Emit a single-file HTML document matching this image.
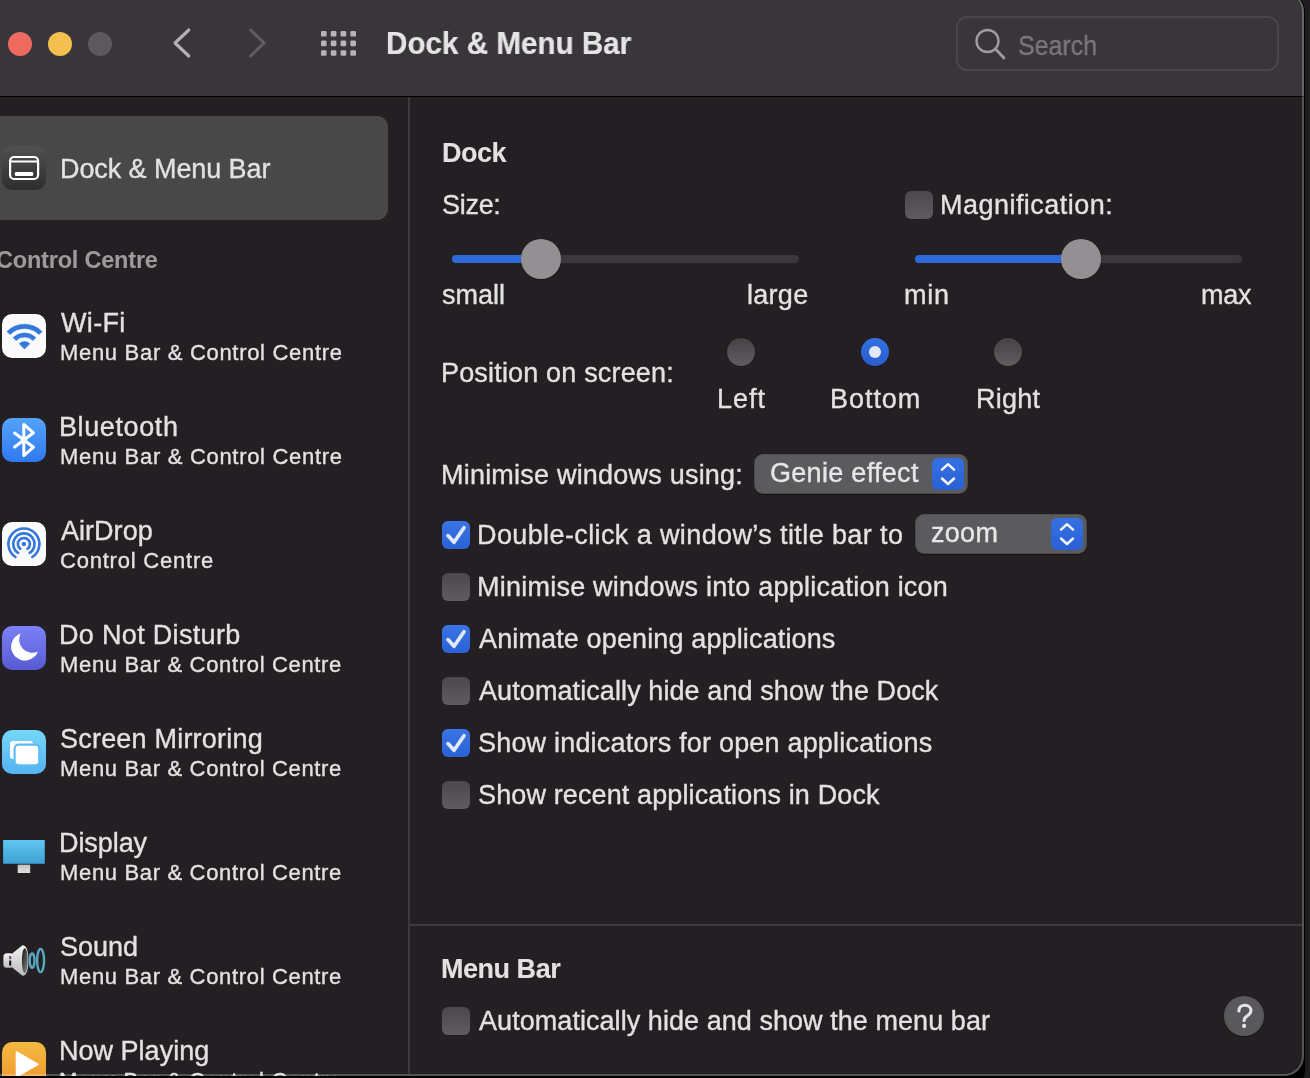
<!DOCTYPE html>
<html><head><meta charset="utf-8"><style>
html,body{margin:0;padding:0;width:1310px;height:1078px;overflow:hidden;background:#1f1c1f}
.t{position:absolute;white-space:nowrap;line-height:normal;font-family:"Liberation Sans", sans-serif;-webkit-text-stroke:0.35px currentColor;will-change:transform}
</style></head><body>
<div style="position:absolute;left:-21px;top:-9px;width:1326px;height:1100px;background:#000;border-radius:0 21px 21px 0"></div>
<div style="position:absolute;left:-20px;top:-8px;width:1324px;height:1084px;background:#231f22;border-radius:0 20px 20px 0;overflow:hidden"><div style="position:absolute;left:0;top:0;width:1324px;height:104px;background:#39363a"></div><div style="position:absolute;left:0;top:104px;width:1324px;height:1px;background:#000"></div></div>
<div style="position:absolute;left:8px;top:32px;width:24px;height:24px;border-radius:50%;background:#ee6a5f"></div>
<div style="position:absolute;left:48px;top:32px;width:24px;height:24px;border-radius:50%;background:#f5bf4f"></div>
<div style="position:absolute;left:88px;top:32px;width:24px;height:24px;border-radius:50%;background:#5c585c"></div>
<svg style="position:absolute;left:0;top:0" width="400" height="96"><polyline points="188.8,30 175,43 188.8,56" fill="none" stroke="#b3b1b3" stroke-width="3.1" stroke-linecap="round" stroke-linejoin="round"/><polyline points="250.5,30 264.2,43 250.5,56" fill="none" stroke="#5f5d60" stroke-width="3.1" stroke-linecap="round" stroke-linejoin="round"/><rect x="321.0" y="31.0" width="5.6" height="5.6" rx="1.2" fill="#b6b4b6"/><rect x="330.8" y="31.0" width="5.6" height="5.6" rx="1.2" fill="#b6b4b6"/><rect x="340.6" y="31.0" width="5.6" height="5.6" rx="1.2" fill="#b6b4b6"/><rect x="350.4" y="31.0" width="5.6" height="5.6" rx="1.2" fill="#b6b4b6"/><rect x="321.0" y="40.6" width="5.6" height="5.6" rx="1.2" fill="#b6b4b6"/><rect x="330.8" y="40.6" width="5.6" height="5.6" rx="1.2" fill="#b6b4b6"/><rect x="340.6" y="40.6" width="5.6" height="5.6" rx="1.2" fill="#b6b4b6"/><rect x="350.4" y="40.6" width="5.6" height="5.6" rx="1.2" fill="#b6b4b6"/><rect x="321.0" y="50.2" width="5.6" height="5.6" rx="1.2" fill="#b6b4b6"/><rect x="330.8" y="50.2" width="5.6" height="5.6" rx="1.2" fill="#b6b4b6"/><rect x="340.6" y="50.2" width="5.6" height="5.6" rx="1.2" fill="#b6b4b6"/><rect x="350.4" y="50.2" width="5.6" height="5.6" rx="1.2" fill="#b6b4b6"/></svg>
<div class="t" id="t1" style="left:385.79px;top:25.95px;font-size:31px;font-weight:bold;color:#e6e4e6;transform:scaleX(0.9553264066623469);transform-origin:0 0;-webkit-text-stroke:0.2px currentColor;">Dock &amp; Menu Bar</div>
<div style="position:absolute;left:956px;top:16px;width:323px;height:55px;border:2px solid #4a474b;border-radius:11px;box-sizing:border-box"></div>
<svg style="position:absolute;left:970px;top:24px" width="44" height="44"><circle cx="17.5" cy="17" r="11" fill="none" stroke="#9e9c9e" stroke-width="2.4"/><line x1="25.5" y1="25" x2="34" y2="34" stroke="#9e9c9e" stroke-width="2.8" stroke-linecap="round"/></svg>
<div class="t" id="t2" style="left:1017.96px;top:31.16px;font-size:27px;font-weight:normal;color:#7b787c;transform:scaleX(0.9245880301133645);transform-origin:0 0;">Search</div>
<div style="position:absolute;left:408px;top:97px;width:2px;height:977px;background:#3c383c"></div>
<div style="position:absolute;left:410px;top:924px;width:892px;height:2px;background:#3c383c"></div>
<div style="position:absolute;left:-12px;top:116px;width:400px;height:104px;background:#474847;border-radius:11px"></div>
<div class="t" id="t3" style="left:60.09px;top:153.56px;font-size:27px;font-weight:normal;color:#e3e1e3;letter-spacing:-0.079px;">Dock &amp; Menu Bar</div>
<div class="t" id="t4" style="left:-4.00px;top:246.93px;font-size:23.5px;font-weight:bold;color:#9c9a9c;letter-spacing:-0.200px;-webkit-text-stroke:0.1px currentColor;">Control Centre</div>
<div class="t" id="t5" style="left:60.52px;top:308.37px;font-size:27px;font-weight:normal;color:#e3e1e3;letter-spacing:0.331px;">Wi-Fi</div>
<div class="t" id="t6" style="left:60.34px;top:340.49px;font-size:22px;font-weight:normal;color:#e3e1e3;letter-spacing:0.692px;">Menu Bar &amp; Control Centre</div>
<div class="t" id="t7" style="left:58.64px;top:412.37px;font-size:27px;font-weight:normal;color:#e3e1e3;letter-spacing:0.602px;">Bluetooth</div>
<div class="t" id="t8" style="left:60.34px;top:444.49px;font-size:22px;font-weight:normal;color:#e3e1e3;letter-spacing:0.692px;">Menu Bar &amp; Control Centre</div>
<div class="t" id="t9" style="left:60.94px;top:516.37px;font-size:27px;font-weight:normal;color:#e3e1e3;letter-spacing:0.029px;">AirDrop</div>
<div class="t" id="t10" style="left:59.98px;top:548.49px;font-size:22px;font-weight:normal;color:#e3e1e3;letter-spacing:0.787px;">Control Centre</div>
<div class="t" id="t11" style="left:58.64px;top:620.37px;font-size:27px;font-weight:normal;color:#e3e1e3;letter-spacing:0.322px;">Do Not Disturb</div>
<div class="t" id="t12" style="left:60.34px;top:652.49px;font-size:22px;font-weight:normal;color:#e3e1e3;letter-spacing:0.667px;">Menu Bar &amp; Control Centre</div>
<div class="t" id="t13" style="left:59.53px;top:724.37px;font-size:27px;font-weight:normal;color:#e3e1e3;letter-spacing:0.209px;">Screen Mirroring</div>
<div class="t" id="t14" style="left:60.34px;top:756.49px;font-size:22px;font-weight:normal;color:#e3e1e3;letter-spacing:0.667px;">Menu Bar &amp; Control Centre</div>
<div class="t" id="t15" style="left:58.64px;top:828.37px;font-size:27px;font-weight:normal;color:#e3e1e3;letter-spacing:-0.070px;">Display</div>
<div class="t" id="t16" style="left:60.34px;top:860.49px;font-size:22px;font-weight:normal;color:#e3e1e3;letter-spacing:0.667px;">Menu Bar &amp; Control Centre</div>
<div class="t" id="t17" style="left:59.53px;top:932.37px;font-size:27px;font-weight:normal;color:#e3e1e3;letter-spacing:-0.039px;">Sound</div>
<div class="t" id="t18" style="left:60.34px;top:964.49px;font-size:22px;font-weight:normal;color:#e3e1e3;letter-spacing:0.667px;">Menu Bar &amp; Control Centre</div>
<div class="t" id="t19" style="left:58.64px;top:1036.37px;font-size:27px;font-weight:normal;color:#e3e1e3;letter-spacing:0.015px;">Now Playing</div>
<div class="t" id="t20" style="left:59.45px;top:1068.49px;font-size:22px;font-weight:normal;color:#e3e1e3;letter-spacing:0.691px;">Menu Bar &amp; Control Centre</div>
<div style="position:absolute;left:2px;top:146px;width:44px;height:44px;border-radius:10px;background:linear-gradient(#505153,#2d2e30);overflow:hidden"><svg width="44" height="44"><rect x="8.1" y="11" width="28" height="22" rx="4" fill="none" stroke="#fff" stroke-width="2.2"/><line x1="8" y1="15.6" x2="36" y2="15.6" stroke="#fff" stroke-width="2"/><rect x="12.8" y="26" width="18.4" height="4" rx="1.3" fill="#fff"/></svg></div>
<div style="position:absolute;left:2px;top:314px;width:44px;height:44px;border-radius:10px;background:#fafafa;overflow:hidden"><svg width="44" height="44"><g fill="#3478dc" stroke="#3478dc" stroke-width="0.6" stroke-linejoin="round"><path d="M22.50 35.00 L17.27 29.77 A7.4 7.4 0 0 1 27.73 29.77 Z"/><path d="M11.12 23.62 A16.1 16.1 0 0 1 33.88 23.62 L30.91 26.59 A11.9 11.9 0 0 0 14.09 26.59 Z"/><path d="M4.96 17.46 A24.8 24.8 0 0 1 40.04 17.46 L37.00 20.50 A20.5 20.5 0 0 0 8.00 20.50 Z"/></g></svg></div>
<div style="position:absolute;left:2px;top:418px;width:44px;height:44px;border-radius:10px;background:linear-gradient(#53a3f8,#2f79f0);overflow:hidden"><svg width="44" height="44"><polyline points="12.6,15 31.5,29.2 21.8,37.6 21.8,6.4 31.5,14.8 12.6,29" fill="none" stroke="#fff" stroke-width="3" stroke-linejoin="round" stroke-linecap="round"/></svg></div>
<div style="position:absolute;left:2px;top:522px;width:44px;height:44px;border-radius:10px;background:#fafafa;overflow:hidden"><svg width="44" height="44"><g fill="none" stroke="#3478dc" stroke-width="2.6" stroke-linecap="round"><path d="M13.46 35.00 A15.5 15.5 0 1 1 30.34 35.00"/><path d="M16.13 30.89 A10.6 10.6 0 1 1 27.67 30.89"/><path d="M18.29 26.79 A6.0 6.0 0 1 1 25.51 26.79"/></g><rect x="19.8" y="19.9" width="4.2" height="4.2" rx="1.6" fill="#3478dc"/></svg></div>
<div style="position:absolute;left:2px;top:626px;width:44px;height:44px;border-radius:10px;background:linear-gradient(#7b81f6,#575bd3);overflow:hidden"><svg width="44" height="44"><path d="M18.7 7.6 A13.8 13.8 0 1 0 35.9 25.4 A13 13 0 0 1 18.7 7.6 Z" fill="#fff"/></svg></div>
<div style="position:absolute;left:2px;top:730px;width:44px;height:44px;border-radius:10px;background:linear-gradient(#76d8f9,#55b2f0);overflow:hidden"><svg width="44" height="44"><rect x="8" y="11" width="23" height="18" rx="3" fill="#fff"/><rect x="12.6" y="14.7" width="24.7" height="20.6" rx="4" fill="#fff" stroke="#5fbdf3" stroke-width="2.2"/></svg></div>
<svg style="position:absolute;left:0;top:830px" width="50" height="50"><defs><linearGradient id="dg" x1="0" y1="0" x2="0" y2="1"><stop offset="0" stop-color="#62c8f2"/><stop offset="1" stop-color="#3d9fd3"/></linearGradient><linearGradient id="sg" x1="0" y1="0" x2="0" y2="1"><stop offset="0" stop-color="#bdbdbd"/><stop offset="1" stop-color="#e2e2e2"/></linearGradient></defs><rect x="17.7" y="33.5" width="12.5" height="9.5" fill="url(#sg)"/><rect x="2.7" y="9.5" width="42.5" height="24.7" fill="url(#dg)" stroke="#141214" stroke-width="0.8"/></svg>
<svg style="position:absolute;left:0;top:930px" width="50" height="60"><defs><linearGradient id="spk" x1="0" y1="0" x2="0" y2="1"><stop offset="0" stop-color="#f2f2f2"/><stop offset="1" stop-color="#bdbdbd"/></linearGradient><linearGradient id="spd" x1="0" y1="0" x2="1" y2="1"><stop offset="0" stop-color="#111"/><stop offset="1" stop-color="#8a8a8a"/></linearGradient></defs><rect x="3.4" y="23.2" width="10.5" height="14.6" rx="3.5" fill="url(#spk)"/><rect x="9.2" y="26" width="2" height="3.2" fill="#4a5866"/><rect x="9.2" y="30.5" width="2" height="5" fill="#111"/><path d="M12.5 23.2 L22.5 15.3 Q28.3 15 28.3 30.5 Q28.3 46 22.5 45.7 L12.5 37.8 Z" fill="url(#spk)"/><ellipse cx="24.8" cy="30.5" rx="2.9" ry="12.3" fill="url(#spd)"/><g fill="none" stroke="#5bb0cc" stroke-width="2.4" opacity="0.95"><ellipse cx="32.1" cy="30.6" rx="2.4" ry="7.2"/><ellipse cx="40.6" cy="30.5" rx="3.5" ry="11.6"/></g></svg>
<div style="position:absolute;left:2px;top:1042px;width:44px;height:44px;border-radius:10px;background:linear-gradient(#f3ba42,#f0952d);overflow:hidden"><svg width="44" height="44"><path d="M14.5 10 L36 22.4 L14.5 34.8 Z" fill="#fff" stroke="#fff" stroke-width="1.6" stroke-linejoin="round"/></svg></div>
<div class="t" id="t21" style="left:441.72px;top:137.56px;font-size:27px;font-weight:bold;color:#e3e1e3;letter-spacing:-0.538px;-webkit-text-stroke:0.1px currentColor;">Dock</div>
<div class="t" id="t22" style="left:441.53px;top:189.56px;font-size:27px;font-weight:normal;color:#e3e1e3;letter-spacing:-0.290px;">Size:</div>
<div style="position:absolute;left:905px;top:191px;width:28px;height:28px;border-radius:6px;background:linear-gradient(#4a484b,#5e5c5f)"></div>
<div class="t" id="t23" style="left:940.22px;top:189.56px;font-size:27px;font-weight:normal;color:#e3e1e3;letter-spacing:0.469px;">Magnification:</div>
<div style="position:absolute;left:452px;top:255px;width:347px;height:8px;border-radius:4px;background:#3a383b"></div>
<div style="position:absolute;left:452px;top:255px;width:89px;height:8px;border-radius:4px;background:#2f68da"></div>
<div style="position:absolute;left:521px;top:239px;width:40px;height:40px;border-radius:50%;background:#929093;box-shadow:0 0.5px 1px rgba(0,0,0,.4)"></div>
<div style="position:absolute;left:915px;top:255px;width:327px;height:8px;border-radius:4px;background:#3a383b"></div>
<div style="position:absolute;left:915px;top:255px;width:166px;height:8px;border-radius:4px;background:#2f68da"></div>
<div style="position:absolute;left:1061px;top:239px;width:40px;height:40px;border-radius:50%;background:#929093;box-shadow:0 0.5px 1px rgba(0,0,0,.4)"></div>
<div class="t" id="t24" style="left:441.87px;top:279.56px;font-size:27px;font-weight:normal;color:#e3e1e3;letter-spacing:-0.015px;">small</div>
<div class="t" id="t25" style="left:747.04px;top:279.56px;font-size:27px;font-weight:normal;color:#e3e1e3;letter-spacing:0.282px;">large</div>
<div class="t" id="t26" style="left:904.07px;top:279.56px;font-size:27px;font-weight:normal;color:#e3e1e3;letter-spacing:0.792px;">min</div>
<div class="t" id="t27" style="left:1200.83px;top:279.56px;font-size:27px;font-weight:normal;color:#e3e1e3;letter-spacing:-0.304px;">max</div>
<div class="t" id="t28" style="left:440.64px;top:357.56px;font-size:27px;font-weight:normal;color:#e3e1e3;letter-spacing:0.171px;">Position on screen:</div>
<div style="position:absolute;left:727px;top:338px;width:28px;height:28px;border-radius:50%;background:linear-gradient(#444245,#5f5d60);box-shadow:0 0 0 0.5px rgba(0,0,0,.35)"></div>
<div style="position:absolute;left:861px;top:338px;width:28px;height:28px;border-radius:50%;background:linear-gradient(#3171e2,#2a5dcd);box-shadow:0 0.5px 1px rgba(0,0,0,.35)"></div>
<div style="position:absolute;left:869px;top:346px;width:12px;height:12px;border-radius:50%;background:#e2e8f8"></div>
<div style="position:absolute;left:994px;top:338px;width:28px;height:28px;border-radius:50%;background:linear-gradient(#444245,#5f5d60);box-shadow:0 0 0 0.5px rgba(0,0,0,.35)"></div>
<div class="t" id="t29" style="left:716.86px;top:383.87px;font-size:27px;font-weight:normal;color:#e3e1e3;letter-spacing:0.954px;">Left</div>
<div class="t" id="t30" style="left:829.64px;top:383.87px;font-size:27px;font-weight:normal;color:#e3e1e3;letter-spacing:0.953px;">Bottom</div>
<div class="t" id="t31" style="left:975.57px;top:383.87px;font-size:27px;font-weight:normal;color:#e3e1e3;letter-spacing:0.216px;">Right</div>
<div class="t" id="t32" style="left:441.13px;top:459.56px;font-size:27px;font-weight:normal;color:#e3e1e3;letter-spacing:0.214px;">Minimise windows using:</div>
<div style="position:absolute;left:754px;top:454px;width:214px;height:40px;border-radius:9px;background:#5b5a5d;box-shadow:inset 0 0 0 1px rgba(0,0,0,0.18), inset 0 1px 0 rgba(255,255,255,0.06), 0 0.5px 1px rgba(0,0,0,.4)"></div>
<div style="position:absolute;left:932px;top:458px;width:32px;height:32px;border-radius:6px;background:linear-gradient(#3571e4,#2a60d4)"><svg width="32" height="32"><polyline points="10,11.7 16,6.199999999999999 22,11.7" fill="none" stroke="#f4f6fc" stroke-width="2.5" stroke-linecap="round" stroke-linejoin="round"/><polyline points="10,20.5 16,26.0 22,20.5" fill="none" stroke="#f4f6fc" stroke-width="2.5" stroke-linecap="round" stroke-linejoin="round"/></svg></div>
<div class="t" id="t33" style="left:770.12px;top:457.76px;font-size:27px;font-weight:normal;color:#e8e6e8;letter-spacing:0.298px;">Genie effect</div>
<div style="position:absolute;left:915px;top:514px;width:172px;height:40px;border-radius:9px;background:#5b5a5d;box-shadow:inset 0 0 0 1px rgba(0,0,0,0.18), inset 0 1px 0 rgba(255,255,255,0.06), 0 0.5px 1px rgba(0,0,0,.4)"></div>
<div style="position:absolute;left:1051px;top:518px;width:32px;height:32px;border-radius:6px;background:linear-gradient(#3571e4,#2a60d4)"><svg width="32" height="32"><polyline points="10,11.7 16,6.199999999999999 22,11.7" fill="none" stroke="#f4f6fc" stroke-width="2.5" stroke-linecap="round" stroke-linejoin="round"/><polyline points="10,20.5 16,26.0 22,20.5" fill="none" stroke="#f4f6fc" stroke-width="2.5" stroke-linecap="round" stroke-linejoin="round"/></svg></div>
<div class="t" id="t34" style="left:931.19px;top:517.77px;font-size:27px;font-weight:normal;color:#e8e6e8;letter-spacing:0.283px;">zoom</div>
<div style="position:absolute;left:442px;top:521px;width:28px;height:28px;border-radius:6px;background:linear-gradient(#3875e6,#2a62d6)"><svg width="28" height="28"><polyline points="6,14.6 12,21.3 22,6.8" fill="none" stroke="#e2e8f8" stroke-width="3.7" stroke-linecap="round" stroke-linejoin="round"/></svg></div>
<div class="t" id="t35" style="left:476.64px;top:519.57px;font-size:27px;font-weight:normal;color:#e3e1e3;letter-spacing:0.393px;">Double-click a window’s title bar to</div>
<div style="position:absolute;left:442px;top:573px;width:28px;height:28px;border-radius:6px;background:linear-gradient(#4a484b,#5e5c5f)"></div>
<div class="t" id="t36" style="left:476.64px;top:571.57px;font-size:27px;font-weight:normal;color:#e3e1e3;letter-spacing:0.234px;">Minimise windows into application icon</div>
<div style="position:absolute;left:442px;top:625px;width:28px;height:28px;border-radius:6px;background:linear-gradient(#3875e6,#2a62d6)"><svg width="28" height="28"><polyline points="6,14.6 12,21.3 22,6.8" fill="none" stroke="#e2e8f8" stroke-width="3.7" stroke-linecap="round" stroke-linejoin="round"/></svg></div>
<div class="t" id="t37" style="left:478.94px;top:623.57px;font-size:27px;font-weight:normal;color:#e3e1e3;letter-spacing:0.134px;">Animate opening applications</div>
<div style="position:absolute;left:442px;top:677px;width:28px;height:28px;border-radius:6px;background:linear-gradient(#4a484b,#5e5c5f)"></div>
<div class="t" id="t38" style="left:478.94px;top:675.57px;font-size:27px;font-weight:normal;color:#e3e1e3;letter-spacing:0.089px;">Automatically hide and show the Dock</div>
<div style="position:absolute;left:442px;top:729px;width:28px;height:28px;border-radius:6px;background:linear-gradient(#3875e6,#2a62d6)"><svg width="28" height="28"><polyline points="6,14.6 12,21.3 22,6.8" fill="none" stroke="#e2e8f8" stroke-width="3.7" stroke-linecap="round" stroke-linejoin="round"/></svg></div>
<div class="t" id="t39" style="left:477.53px;top:727.57px;font-size:27px;font-weight:normal;color:#e3e1e3;letter-spacing:0.191px;">Show indicators for open applications</div>
<div style="position:absolute;left:442px;top:781px;width:28px;height:28px;border-radius:6px;background:linear-gradient(#4a484b,#5e5c5f)"></div>
<div class="t" id="t40" style="left:477.53px;top:779.57px;font-size:27px;font-weight:normal;color:#e3e1e3;letter-spacing:0.123px;">Show recent applications in Dock</div>
<div class="t" id="t41" style="left:441.20px;top:953.96px;font-size:27px;font-weight:bold;color:#e3e1e3;letter-spacing:-0.476px;-webkit-text-stroke:0.1px currentColor;">Menu Bar</div>
<div style="position:absolute;left:442px;top:1007px;width:28px;height:28px;border-radius:6px;background:linear-gradient(#4a484b,#5e5c5f)"></div>
<div class="t" id="t42" style="left:478.66px;top:1005.57px;font-size:27px;font-weight:normal;color:#e3e1e3;letter-spacing:0.055px;">Automatically hide and show the menu bar</div>
<div style="position:absolute;left:1224px;top:996px;width:40px;height:40px;border-radius:50%;background:#59585b;box-shadow:0 1px 1px rgba(0,0,0,.35)"></div>
<div class="t" style="left:0;top:0;width:0;height:0;"></div>
<svg style="position:absolute;left:1214px;top:986px" width="60" height="60"><g transform="translate(-1214,-986)"><path d="M1238.9 1011 C1238.9 1007.2 1241.6 1005.3 1244.9 1005.3 C1248.5 1005.3 1251 1007.6 1251 1010.6 C1251 1013.4 1249 1014.7 1247.1 1016 C1245.1 1017.3 1244.1 1018.4 1244.1 1020.4" fill="none" stroke="#e6e4e6" stroke-width="3.1" stroke-linecap="round"/><circle cx="1244.1" cy="1025.9" r="2.1" fill="#e6e4e6"/></g></svg>
<div style="position:absolute;left:-20px;top:-8px;width:1324px;height:1084px;box-sizing:border-box;border-right:2px solid rgba(255,255,255,0.24);border-bottom:2px solid rgba(255,255,255,0.24);border-radius:0 20px 20px 0"></div>
<div style="position:absolute;left:0;top:1076px;width:1300px;height:2px;background:#000"></div>
</body></html>
